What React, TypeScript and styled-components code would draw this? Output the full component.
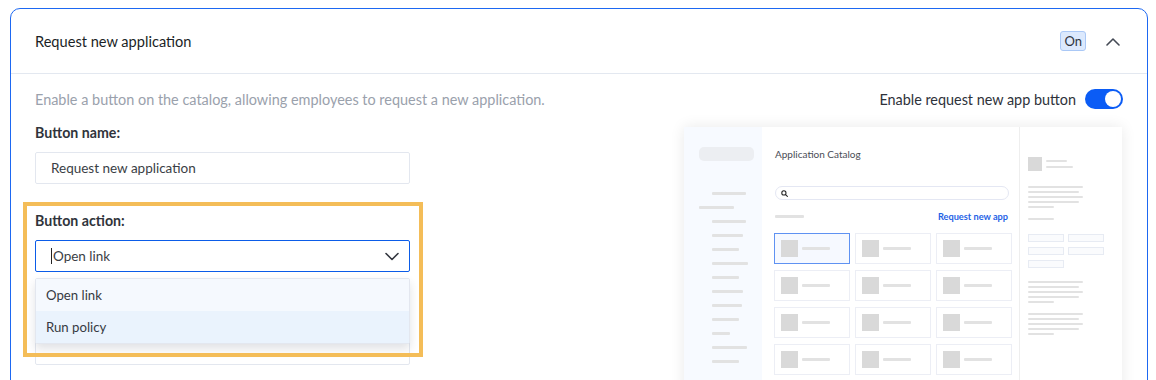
import styled, { createGlobalStyle } from "styled-components";

const GlobalStyle = createGlobalStyle`
  body {
    margin: 0;
    background: #ffffff;
    font-family: Lato, "Noto Sans", sans-serif;
    color: #2b2f36;
  }
`;

const Card = styled.div`
  margin: 8px 8px 0 10px;
  border: 1px solid #1d68f2;
  border-radius: 10px;
  background: #fff;
  overflow: hidden;
`;

const Header = styled.div`
  height: 64px;
  display: flex;
  align-items: center;
  padding: 0 27px 0 24px;
  border-bottom: 1px solid #e3e8f0;
`;

const Title = styled.div`
  flex: 1;
  font-size: 14.6px;
  color: #1b1f26;
`;

const Badge = styled.span`
  height: 20px;
  line-height: 18px;
  box-sizing: border-box;
  padding: 0 3px;
  font-size: 13px;
  color: #2f3440;
  background: #dce9fd;
  border: 1px solid #aac8f6;
  border-radius: 3px;
  margin-right: 20px;
`;

const Body = styled.div`
  padding: 15px 24px 14px 24px;
`;

const TopRow = styled.div`
  height: 20px;
  display: flex;
  align-items: center;
  justify-content: space-between;
`;

const Hint = styled.span`
  font-size: 14.45px;
  color: #9aa1ac;
`;

const ToggleWrap = styled.label`
  display: flex;
  align-items: center;
  gap: 9px;
  font-size: 14.4px;
  color: #2e323a;
`;

const Switch = styled.span<{ $on: boolean }>`
  width: 38px;
  height: 20px;
  border-radius: 10px;
  background: ${(p) => (p.$on ? "#0b5cf5" : "#c8ccd4")};
  display: flex;
  align-items: center;
  justify-content: ${(p) => (p.$on ? "flex-end" : "flex-start")};
  padding: 0 2px;
  box-sizing: border-box;
  &::after {
    content: "";
    width: 16px;
    height: 16px;
    border-radius: 50%;
    background: #fff;
  }
`;

const MainRow = styled.div`
  display: flex;
  justify-content: space-between;
  margin-top: 14px;
`;

const Form = styled.div`
  width: 375px;
  display: flex;
  flex-direction: column;
`;

const Field = styled.div<{ $top?: number }>`
  position: relative;
  display: flex;
  flex-direction: column;
  gap: 9px;
  margin-top: ${(p) => p.$top ?? 0}px;
`;

const Label = styled.div`
  font-size: 14.2px;
  line-height: 20px;
  font-weight: 700;
  color: #30343b;
`;

const Input = styled.div<{ $focus?: boolean }>`
  height: 32px;
  box-sizing: border-box;
  border: 1px solid ${(p) => (p.$focus ? "#0b5ce8" : "#e3e7ef")};
  border-radius: 2px;
  display: flex;
  align-items: center;
  padding: 0 10px 0 15px;
  font-size: 13.5px;
  color: #3a3e45;
  background: #fff;
`;

const Caret = styled.span`
  width: 1px;
  height: 16px;
  background: #222;
  margin-right: 1px;
`;

const Grow = styled.span`
  flex: 1;
`;

const Menu = styled.div`
  position: absolute;
  top: 67px;
  left: 0;
  right: 0;
  border: 1px solid #e3e7ef;
  border-radius: 2px;
  box-shadow: 0 5px 10px rgba(40, 50, 70, 0.14);
  background: #fff;
  z-index: 2;
`;

const Option = styled.div<{ $hover?: boolean }>`
  height: 32px;
  display: flex;
  align-items: center;
  padding-left: 10px;
  font-size: 13.2px;
  color: #363a42;
  background: ${(p) => (p.$hover ? "#eaf3fd" : "#f5f9fe")};
`;

const Highlight = styled.div`
  position: absolute;
  top: -9px;
  left: -12px;
  width: 400px;
  height: 155px;
  box-sizing: border-box;
  border: 4px solid #f4bd58;
  z-index: 3;
  pointer-events: none;
`;

const Preview = styled.div`
  margin-top: 4px;
  margin-right: 1px;
  width: 438px;
  display: grid;
  grid-template-columns: 78px 257px 103px;
  background: #fff;
  box-shadow: 0 0 14px rgba(0, 0, 0, 0.09);
`;

const Sidebar = styled.div`
  background: #f7faff;
  padding: 20px 0 16px 15px;
  display: flex;
  flex-direction: column;
`;

const Pill = styled.div`
  width: 55px;
  height: 14px;
  border-radius: 5px;
  background: #eceef2;
  margin-bottom: 31px;
`;

const NavList = styled.div`
  display: flex;
  flex-direction: column;
  gap: 11px;
`;

const Bar = styled.div<{ $w: number; $indent?: number; $h?: number }>`
  width: ${(p) => p.$w}px;
  height: ${(p) => p.$h ?? 3}px;
  margin-left: ${(p) => p.$indent ?? 0}px;
  background: #e2e2e2;
  border-radius: 1px;
  flex-shrink: 0;
`;

const Catalog = styled.div`
  padding: 21px 8px 16px 12px;
`;

const CatalogTitle = styled.div`
  font-size: 10px;
  line-height: 12px;
  color: #4a4d55;
  margin-left: 1px;
`;

const Search = styled.div`
  margin: 26px 2px 0 1px;
  height: 14px;
  box-sizing: border-box;
  border: 1px solid #e4e7f3;
  border-radius: 7px;
  display: flex;
  align-items: center;
  padding-left: 5px;
`;

const ListHead = styled.div`
  margin: 10px 3px 0 1px;
  height: 12px;
  display: flex;
  align-items: center;
  justify-content: space-between;
`;

const RequestLink = styled.span`
  font-size: 9.2px;
  font-weight: 700;
  color: #1f62e6;
`;

const AppGrid = styled.div`
  margin-top: 11px;
  display: grid;
  grid-template-columns: repeat(3, 76px);
  grid-auto-rows: 31px;
  column-gap: 5px;
  row-gap: 6px;
`;

const AppCard = styled.div<{ $selected?: boolean }>`
  box-sizing: border-box;
  border: ${(p) => (p.$selected ? "1.5px solid #5f92f2" : "1px solid #eceef5")};
  background: ${(p) => (p.$selected ? "#f6f9ff" : "#fff")};
  display: flex;
  align-items: center;
  padding-left: 6px;
  gap: 4px;
`;

const Thumb = styled.div<{ $size: number }>`
  width: ${(p) => p.$size}px;
  height: ${(p) => p.$size}px;
  background: #d9d9d9;
  flex-shrink: 0;
`;

const Details = styled.div`
  border-left: 1px solid #eeeeee;
  padding: 30px 0 16px 8px;
  display: flex;
  flex-direction: column;
`;

const DetailHead = styled.div`
  display: flex;
  align-items: center;
  gap: 4px;
`;

const Stack = styled.div<{ $gap: number; $top: number }>`
  display: flex;
  flex-direction: column;
  gap: ${(p) => p.$gap}px;
  margin-top: ${(p) => p.$top}px;
`;

const ChipGrid = styled.div`
  margin-top: 14px;
  display: grid;
  grid-template-columns: repeat(2, 36px);
  grid-auto-rows: 8px;
  gap: 5px 4px;
`;

const Chip = styled.div`
  border: 1px solid #e7ebf3;
  background: #fafbfd;
`;

const ChevronUp = () => (
  <svg width="14" height="9" viewBox="0 0 14 9" fill="none">
    <path d="M1 8L7 2L13 8" stroke="#444a55" strokeWidth="1.6" strokeLinecap="round" strokeLinejoin="round" />
  </svg>
);

const ChevronDown = () => (
  <svg width="14" height="9" viewBox="0 0 14 9" fill="none">
    <path d="M1 1.5L7 7.5L13 1.5" stroke="#33373f" strokeWidth="1.6" strokeLinecap="round" strokeLinejoin="round" />
  </svg>
);

const SearchIcon = () => (
  <svg width="7" height="7" viewBox="0 0 8 8" fill="none">
    <circle cx="3.3" cy="3.3" r="2.4" stroke="#222" strokeWidth="1.2" />
    <path d="M5.2 5.2L7.3 7.3" stroke="#222" strokeWidth="1.2" strokeLinecap="round" />
  </svg>
);

const navBars = [
  { w: 34, indent: 13 },
  { w: 35, indent: 0 },
  { w: 34, indent: 13 },
  { w: 31, indent: 13 },
  { w: 27, indent: 13 },
  { w: 36, indent: 13 },
  { w: 27, indent: 13 },
  { w: 31, indent: 13 },
  { w: 30, indent: 13 },
  { w: 27, indent: 13 },
  { w: 18, indent: 13 },
  { w: 35, indent: 13 },
  { w: 27, indent: 13 },
];

const textBlock = [55, 51, 55, 51, 26];

export default function App() {
  return (
    <>
      <GlobalStyle />
      <Card>
        <Header>
          <Title>Request new application</Title>
          <Badge>On</Badge>
          <ChevronUp />
        </Header>
        <Body>
          <TopRow>
            <Hint>Enable a button on the catalog, allowing employees to request a new application.</Hint>
            <ToggleWrap>
              Enable request new app button
              <Switch $on />
            </ToggleWrap>
          </TopRow>
          <MainRow>
            <Form>
              <Field>
                <Label>Button name:</Label>
                <Input>Request new application</Input>
              </Field>
              <Field $top={27}>
                <Highlight />
                <Label>Button action:</Label>
                <Input $focus>
                  <Caret />
                  <Grow>Open link</Grow>
                  <ChevronDown />
                </Input>
                <Menu>
                  <Option>Open link</Option>
                  <Option $hover>Run policy</Option>
                </Menu>
              </Field>
              <Field $top={61}>
                <Input />
              </Field>
            </Form>
            <Preview>
              <Sidebar>
                <Pill />
                <NavList>
                  {navBars.map((b, i) => (
                    <Bar key={i} $w={b.w} $indent={b.indent} />
                  ))}
                </NavList>
              </Sidebar>
              <Catalog>
                <CatalogTitle>Application Catalog</CatalogTitle>
                <Search>
                  <SearchIcon />
                </Search>
                <ListHead>
                  <Bar $w={29} />
                  <RequestLink>Request new app</RequestLink>
                </ListHead>
                <AppGrid>
                  {Array.from({ length: 12 }).map((_, i) => (
                    <AppCard key={i} $selected={i === 0}>
                      <Thumb $size={17} />
                      <Bar $w={28} />
                    </AppCard>
                  ))}
                </AppGrid>
              </Catalog>
              <Details>
                <DetailHead>
                  <Thumb $size={14} />
                  <Stack $gap={4} $top={0}>
                    <Bar $w={21} $h={2} />
                    <Bar $w={27} $h={2} />
                  </Stack>
                </DetailHead>
                <Stack $gap={3} $top={15}>
                  {textBlock.map((w, i) => (
                    <Bar key={i} $w={w} $h={2} />
                  ))}
                </Stack>
                <Stack $gap={0} $top={10}>
                  <Bar $w={26} $h={2} />
                </Stack>
                <ChipGrid>
                  <Chip />
                  <Chip />
                  <Chip />
                  <Chip />
                  <Chip />
                </ChipGrid>
                <Stack $gap={3} $top={13}>
                  {textBlock.map((w, i) => (
                    <Bar key={i} $w={w} $h={2} />
                  ))}
                </Stack>
                <Stack $gap={3} $top={10}>
                  {textBlock.map((w, i) => (
                    <Bar key={i} $w={w} $h={2} />
                  ))}
                </Stack>
              </Details>
            </Preview>
          </MainRow>
        </Body>
      </Card>
    </>
  );
}
